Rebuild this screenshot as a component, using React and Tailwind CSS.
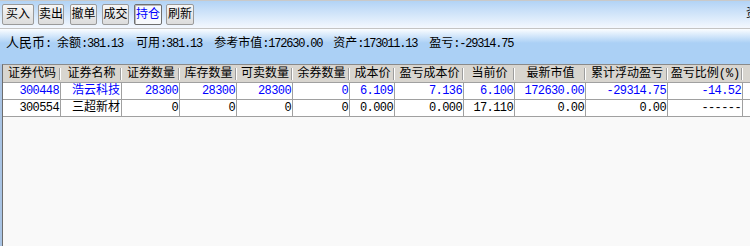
const cols = [
    { title: '证券代码', w: 'w-[58px]' },
    { title: '证券名称', w: 'w-[61px]' },
    { title: '证券数量', w: 'w-[58px]' },
    { title: '库存数量', w: 'w-[57px]' },
    { title: '可卖数量', w: 'w-[56px]' },
    { title: '余券数量', w: 'w-[57px]' },
    { title: '成本价', w: 'w-[45px]' },
    { title: '盈亏成本价', w: 'w-[69px]' },
    { title: '当前价', w: 'w-[51px]' },
    { title: '最新市值', w: 'w-[71px]' },
    { title: '累计浮动盈亏', w: 'w-[82px]' },
    { title: '盈亏比例(%)', w: 'w-[75px]' }
];

const rows = [
    {
        color: 'text-[#0000ff]',
        cells: ['300448', '浩云科技', '28300', '28300', '28300', '0', '6.109', '7.136', '6.100', '172630.00', '-29314.75', '-14.52']
    },
    {
        color: 'text-black',
        cells: ['300554', '三超新材', '0', '0', '0', '0', '0.000', '0.000', '17.110', '0.00', '0.00', '------']
    }
];

const buttons = [
    { label: '买入', w: 'w-[32px]', ml: 'ml-[2px]' },
    { label: '卖出', w: 'w-[26px]', ml: 'ml-[4px]' },
    { label: '撤单', w: 'w-[27px]', ml: 'ml-[6px]' },
    { label: '成交', w: 'w-[27px]', ml: 'ml-[5px]' },
    { label: '持仓', w: 'w-[28px]', ml: 'ml-[5px]', active: true },
    { label: '刷新', w: 'w-[28px]', ml: 'ml-[4px]' }
];

const info = [
    { label: '人民币', value: '', ml: '' },
    { label: '余额', value: '381.13', ml: 'ml-[6px]' },
    { label: '可用', value: '381.13', ml: 'ml-[13px]' },
    { label: '参考市值', value: '172630.00', ml: 'ml-[12px]' },
    { label: '资产', value: '173011.13', ml: 'ml-[11px]' },
    { label: '盈亏', value: '-29314.75', ml: 'ml-[12px]' }
];

const App = () => {
    return (
        <div className="w-[750px] h-[246px] overflow-hidden flex flex-col bg-[#f9f9f9] font-['Liberation_Mono','Noto_Sans_CJK_SC',monospace] text-black">
            {/* toolbar */}
            <div className="h-[28px] shrink-0 flex items-center border-t border-[#c9c9c9] bg-linear-to-b from-[#b2d3f5] to-[#f4f8fe]">
                {buttons.map((b) => (
                    <div
                        key={b.label}
                        className={`${b.w} ${b.ml} h-[21px] flex items-center justify-center rounded-[2px] border text-[12px] leading-none ${
                            b.active
                                ? 'border-[#6f6f6f] bg-[#f7f9fc] text-[#0000ff] shadow-[inset_1px_1px_0_#b8b8b8]'
                                : 'border-[#9a9a9a] bg-linear-to-b from-[#f6f6f6] to-[#dcdcdc]'
                        }`}
                    >
                        {b.label}
                    </div>
                ))}
                <div className="ml-auto w-[4px] h-[14px] overflow-hidden whitespace-nowrap text-[12px] leading-[14px] mb-[1px]">
                    资金
                </div>
            </div>

            {/* info bar */}
            <div className="h-[36px] shrink-0 border-t border-[#c4c4c4] bg-linear-to-b from-[#fbfdff] to-[#abd0f5] to-40% flex items-start pt-[8px] pl-[6px]">
                {info.map((i) => (
                    <span key={i.label} className={`${i.ml} shrink-0 whitespace-nowrap text-[12px] leading-[14px]`}>
                        <span className={i.label === '人民币' ? 'text-[13px]' : ''}>{i.label}</span>
                        <span className="tracking-[-1.2px]">:{i.value}</span>
                    </span>
                ))}
            </div>

            {/* table */}
            <div className="flex-1 border-l-2 border-[#a9c4e4]">
                <div className="h-full border-l border-[#6d6d6d] border-t border-t-[#8a8a8a]">
                    <div className="h-[18px] flex bg-[#d8d5cf] border-b border-[#a0a0a0]">
                        {cols.map((c) => (
                            <div key={c.title} className={`${c.w} shrink-0 relative flex items-center justify-center text-[12px] leading-none whitespace-nowrap`}>
                                {c.title}
                                <span className="absolute right-0 top-[3px] h-[12px] w-[2px] border-l border-[#9d9d9d] border-r border-r-white" />
                            </div>
                        ))}
                        <div className="flex-1" />
                    </div>
                    {rows.map((r) => (
                        <div key={r.cells[0]} className={`h-[17px] flex bg-white border-b border-[#a0a0a0] ${r.color}`}>
                            {r.cells.map((v, idx) => (
                                <div
                                    key={idx}
                                    className={`${cols[idx].w} shrink-0 border-r border-[#a0a0a0] flex items-center justify-end pr-[1px] text-[12px] leading-none whitespace-nowrap ${
                                        idx === 1 ? '' : 'tracking-[-0.6px]'
                                    }`}
                                >
                                    {v}
                                </div>
                            ))}
                            <div className="flex-1" />
                        </div>
                    ))}
                </div>
            </div>
        </div>
    );
};

export default App;
